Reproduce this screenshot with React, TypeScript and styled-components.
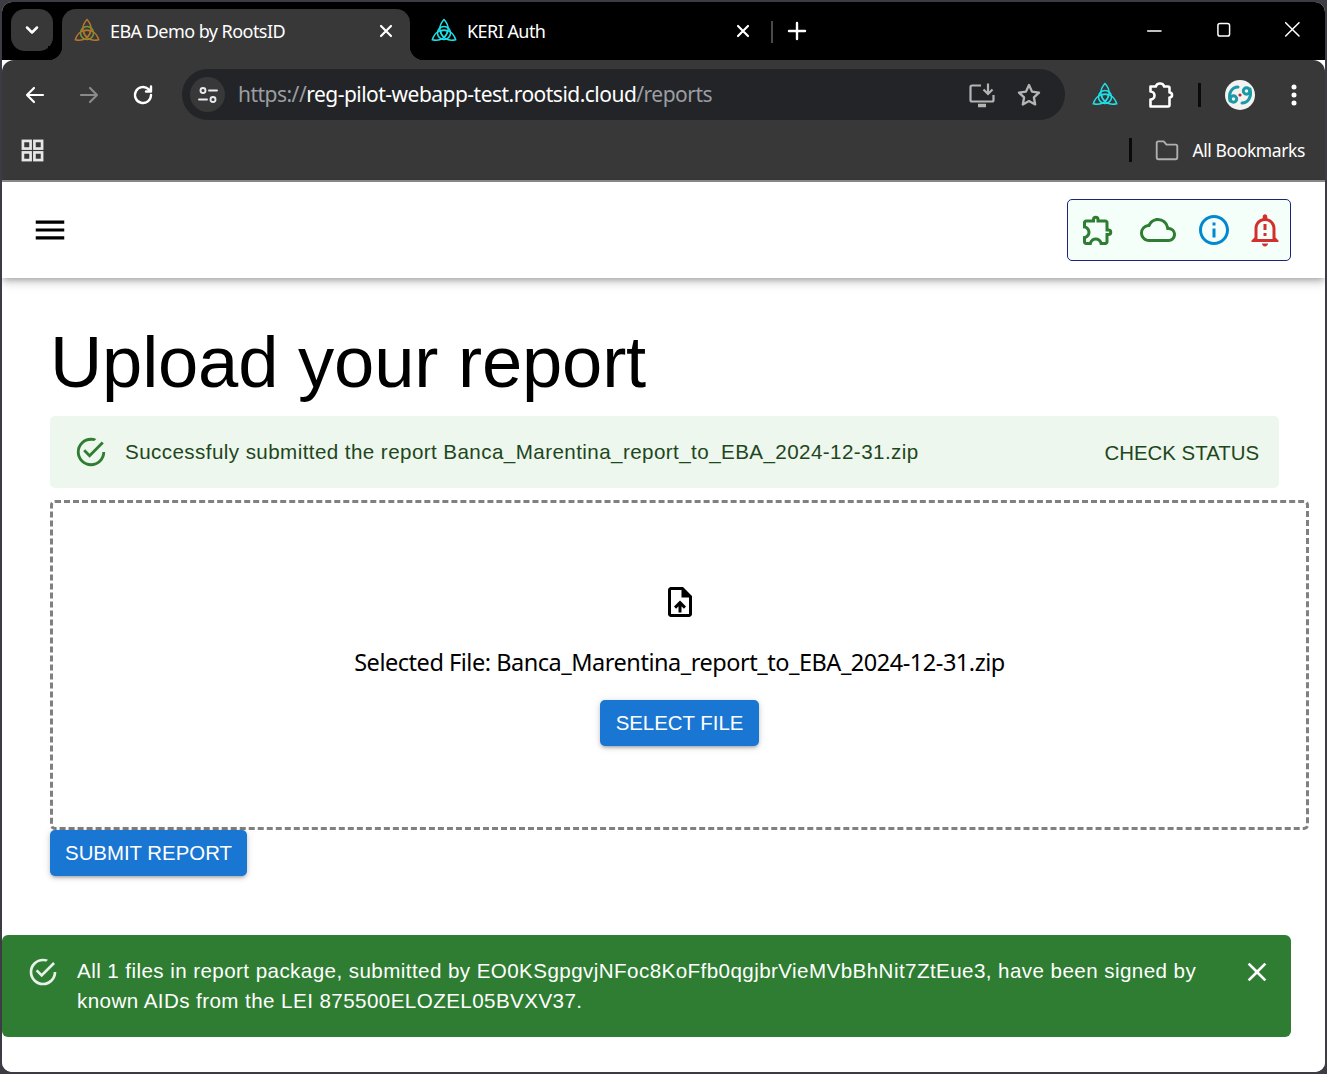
import React from "react";
import styled, { createGlobalStyle } from "styled-components";
import { MdOutlineExtension, MdOutlineCloud, MdInfoOutline, MdOutlineNotificationImportant, MdOutlineUploadFile, MdClose, MdMenu } from "react-icons/md";

const Global = createGlobalStyle`
  html, body { margin: 0; padding: 0; background: #2a2a33; }
  * { box-sizing: border-box; }
  #root { width: 1327px; height: 1074px; overflow: hidden; }
`;

const Win = styled.div`
  width: 1327px; height: 1074px; display: flex; flex-direction: column; position: relative;
  padding: 2px; background: #3c3c44;
`;
const Frame = styled.div`
  flex: 1; display: flex; flex-direction: column; border-radius: 10px; overflow: hidden; background: #fff; position: relative;
`;
const TabStrip = styled.div`
  height: 58px; background: #000; display: flex; align-items: flex-end; padding-left: 9px; flex: none;
  font-family: "Noto Sans", sans-serif;
`;
const TabSearch = styled.button`
  width: 42px; height: 42px; border: 0; border-radius: 14px; background: #383838; color: #fff; display: flex; align-items: center; justify-content: center; padding: 0;
  margin: 0 9px 9px 0; align-self: flex-end;
`;
const Tab = styled.div<{ $active?: boolean }>`
  height: 51px; display: flex; align-items: center; position: relative; color: #fff; font-size: 18px; letter-spacing: -0.55px;
  border-radius: 14px 14px 0 0; padding-bottom: 7px;
  width: ${(p) => (p.$active ? "348px" : "361px")};
  padding-left: ${(p) => (p.$active ? "12px" : "21px")};
  padding-right: ${(p) => (p.$active ? "14px" : "18px")};
  background: ${(p) => (p.$active ? "#383838" : "transparent")};
  &::before, &::after {
    content: ${(p) => (p.$active ? '""' : "none")};
    position: absolute; bottom: 0; width: 14px; height: 14px;
  }
  &::before { left: -14px; background: radial-gradient(circle at 0 0, #000 14px, #383838 14.5px); }
  &::after { right: -14px; background: radial-gradient(circle at 100% 0, #000 14px, #383838 14.5px); }
`;
const TabTitle = styled.span`
  margin-left: 10px; flex: 1; white-space: nowrap;
`;
const TabDivider = styled.div`
  width: 2px; height: 22px; background: #4a4a4a; align-self: flex-end; margin-bottom: 17px;
`;
const PlusBtn = styled.div`
  width: 24px; height: 24px; margin: 0 0 17px 12px; color: #fff;
`;
const WinControls = styled.div`
  margin-left: auto; display: flex; align-items: center; gap: 49px; color: #fff; height: 58px; padding: 0 21px 0 0;
`;
const Toolbar = styled.div`
  height: 69px; background: #383838; display: flex; align-items: flex-start; flex: none; padding: 9px 0 0 21px; color: #fff;
  border-radius: 12px 12px 0 0;
`;
const ToolRow = styled.div`
  height: 51px; display: flex; align-items: center; flex: none;
`;
const NavIcon = styled.div<{ $dim?: boolean; $mr?: number }>`
  width: 24px; height: 24px; flex: none; color: ${(p) => (p.$dim ? "#8a8a8a" : "#fff")};
  margin-right: ${(p) => p.$mr ?? 30}px;
  display: flex; align-items: center; justify-content: center;
`;
const Omnibox = styled.div`
  width: 883px; height: 51px; border-radius: 26px; background: #232427; display: flex; align-items: center; padding: 0 21px 0 8px; flex: none;
`;
const SiteInfo = styled.div`
  width: 35px; height: 35px; border-radius: 50%; background: #383838; display: flex; align-items: center; justify-content: center; color: #e8eaed; flex: none;
`;
const Url = styled.div`
  margin: 0 0 2px 13px; font-family: "Noto Sans", sans-serif; font-size: 21px; letter-spacing: -0.52px; color: #9b9ea3; flex: 1; white-space: nowrap;
`;
const Host = styled.span`
  color: #fff;
`;
const OmniIcon = styled.div<{ $ml?: number }>`
  width: 30px; height: 30px; color: #b4b4b4; margin-left: ${(p) => p.$ml ?? 0}px; display: flex; align-items: center; justify-content: center; flex: none;
`;
const ToolIcons = styled.div`
  display: flex; align-items: center; margin-left: 27px; height: 100%; color: #fff;
`;
const ExtensionGlyph = styled.svg`
  flex: none; margin-left: 28px;
`;
const VSep = styled.div`
  width: 3px; height: 24px; background: #0a0a0a; flex: none; margin-left: 24px;
`;
const BookSep = styled.div`
  width: 3px; height: 24px; background: #0a0a0a; flex: none;
`;
const Avatar = styled.div`
  width: 30px; height: 30px; border-radius: 50%; background: #f3f3f3; overflow: hidden; flex: none; margin: 0 27px 0 24px;
`;
const Bookmarks = styled.div`
  height: 53px; background: #383838; display: flex; align-items: center; padding: 0 20px 9px 19px; flex: none; color: #fff;
  font-family: "Noto Sans", sans-serif; font-size: 17.5px; letter-spacing: -0.4px;
  border-bottom: 2px solid #8c8c8c;
`;
const BookmarkEnd = styled.div`
  margin-left: auto; display: flex; align-items: center; gap: 12px; color: #fff; white-space: nowrap;
`;
const FolderWrap = styled.div`
  width: 26px; height: 26px; color: #b0b0b0; margin-left: 10px; display: flex; align-items: center;
`;
const AppBar = styled.header`
  height: 96px; background: #fff; display: flex; align-items: center; padding: 0 34px 0 29px; flex: none; justify-content: space-between;
  box-shadow: 0 3px 6px -1px rgba(0,0,0,.25), 0 5px 10px rgba(0,0,0,.14); position: relative;
`;
const Hamburger = styled.div`
  width: 38px; height: 38px; color: #000; display: flex; align-items: center; justify-content: center; font-size: 38px;
`;
const StatusBox = styled.div`
  width: 224px; height: 62px; border: 1px solid #1a237e; border-radius: 5px; background: #f5fffa; display: flex; align-items: center; padding: 0 0 0 11.5px;
`;
const StatusIcon = styled.span<{ $c: string; $s: number; $ml?: number }>`
  display: flex; color: ${(p) => p.$c}; font-size: ${(p) => p.$s}px; margin-left: ${(p) => p.$ml ?? 0}px;
`;
const Main = styled.main`
  flex: 1; padding: 0 16px 0 48px; display: flex; flex-direction: column; align-items: flex-start; background: #fff;
`;
const Heading = styled.h1`
  margin: 40px 0 0 0; height: 98px; line-height: 88px; font-family: "Liberation Sans", Arial, sans-serif; font-weight: 400; font-size: 72.4px; color: #000; letter-spacing: -0.2px; white-space: nowrap;
`;
const AlertBar = styled.div`
  width: 1229px; height: 72px; background: #edf7ed; border-radius: 5px; display: flex; align-items: center; padding: 0 20px 0 24px; color: #1e4620;
  font-family: "Liberation Sans", Arial, sans-serif; font-size: 20.6px; letter-spacing: 0.42px;
`;
const AlertMsg = styled.span`
  margin-left: 17px; flex: 1; white-space: nowrap; margin-bottom: 1px;
`;
const AlertAction = styled.span`
  font-size: 20.4px; letter-spacing: 0; margin-top: 3px; color: #1e4620;
`;
const Drop = styled.div`
  margin-top: 12px; width: 1259px; height: 330px; border: 3px dashed #808080; border-radius: 5px; display: flex; flex-direction: column; align-items: center; padding-top: 81px;
`;
const FileIcon = styled.div`
  font-size: 36px; color: #000; display: flex; height: 36px;
`;
const SelectedFile = styled.div`
  margin-top: 25px; font-family: "Noto Sans", sans-serif; font-size: 23.5px; letter-spacing: -0.47px; color: #000; line-height: 34px; white-space: nowrap;
`;
const PrimaryBtn = styled.button<{ $w: number; $mt?: number }>`
  width: ${(p) => p.$w}px; height: 46px; border: 0; border-radius: 5px; background: #1976d2; color: #fff; font-family: "Liberation Sans", Arial, sans-serif; font-size: 20.4px;
  box-shadow: 0 3px 3px -2px rgba(0,0,0,.2), 0 2px 4px rgba(0,0,0,.14), 0 1px 8px rgba(0,0,0,.12); margin-top: ${(p) => p.$mt ?? 0}px; padding: 0; flex: none;
`;
const Snack = styled.div`
  position: absolute; left: 0; top: 933px; width: 1289px; height: 102px; border-radius: 6px; background: #2e7d32; color: #fff; display: flex;
  font-family: "Liberation Sans", Arial, sans-serif; font-size: 20.6px; letter-spacing: 0.42px; line-height: 30px; padding: 21px 0 0 25px;
`;
const SnackIcon = styled.div`
  width: 32px; height: 32px; flex: none; color: #e8f2e8;
`;
const SnackMsg = styled.div`
  margin-left: 18px; width: 1140px;
`;
const SnackClose = styled.div`
  font-size: 32px; display: flex; height: 32px; margin-left: 24px;
`;

const Stroke: React.FC<{ size?: number; sw?: number; children: React.ReactNode }> = ({ size = 24, sw = 2, children }) => (
  <svg width={size} height={size} viewBox="0 0 24 24" fill="none" stroke="currentColor" strokeWidth={sw} strokeLinecap="round" strokeLinejoin="round">{children}</svg>
);

const LOBE = "M13 1.500C7 8 8 15 13 19C18 15 19 8 13 1.500Z";
const Knot: React.FC<{ a: string; b: string; size?: number }> = ({ a, b, size = 26 }) => (
  <svg width={size} height={size} viewBox="0 0 26 26" fill="none" strokeWidth="1.500">
    <circle cx="13" cy="15" r="6.500" stroke={b} />
    <path d={LOBE} stroke={a} />
    <path d={LOBE} stroke={a} transform="rotate(120 13 15)" />
    <path d={LOBE} stroke={a} transform="rotate(240 13 15)" />
  </svg>
);

const SuccessIcon: React.FC<{ size: number }> = ({ size }) => (
  <svg width={size} height={size} viewBox="0 0 24 24" fill="currentColor">
    <path d="M20,12A8,8 0 0,1 12,20A8,8 0 0,1 4,12A8,8 0 0,1 12,4C12.76,4 13.5,4.11 14.2,4.31L15.77,2.74C14.61,2.26 13.34,2 12,2A10,10 0 0,0 2,12A10,10 0 0,0 12,22A10,10 0 0,0 22,12M7.91,10.08L6.5,11.5L11,16L21,6L19.59,4.58L11,13.17L7.91,10.08Z" />
  </svg>
);

export default function App() {
  return (
    <Win>
      <Global />
      <Frame>
        <TabStrip>
          <TabSearch aria-label="Search tabs">
            <Stroke size={20} sw={3}><path d="M6 9l6 6 6-6" /></Stroke>
          </TabSearch>
          <Tab $active>
            <Knot a="#b5752a" b="#6f9a3c" />
            <TabTitle>EBA Demo by RootsID</TabTitle>
            <Stroke size={20} sw={2.6}><path d="M6 6l12 12M18 6L6 18" /></Stroke>
          </Tab>
          <Tab>
            <Knot a="#1fe0e8" b="#1fe0e8" />
            <TabTitle>KERI Auth</TabTitle>
            <Stroke size={20} sw={2.6}><path d="M6 6l12 12M18 6L6 18" /></Stroke>
          </Tab>
          <TabDivider />
          <PlusBtn><Stroke sw={2.4}><path d="M12 4v16M4 12h16" /></Stroke></PlusBtn>
          <WinControls>
            <Stroke size={20} sw={1.8}><path d="M2 12h16" /></Stroke>
            <Stroke size={20} sw={1.8}><rect x="3.500" y="3" width="14" height="15" rx="2.500" /></Stroke>
            <Stroke size={20} sw={1.8}><path d="M2 2l16 16M18 2L2 18" /></Stroke>
          </WinControls>
        </TabStrip>
        <Toolbar>
          <ToolRow>
            <NavIcon><Stroke size={26} sw={2.2}><path d="M20 12H4M11 5l-7 7 7 7" /></Stroke></NavIcon>
            <NavIcon $dim><Stroke size={26} sw={2.2}><path d="M4 12h16M13 5l7 7-7 7" /></Stroke></NavIcon>
            <NavIcon $mr={27}><Stroke size={26} sw={2.4}><path d="M20 12a8 8 0 1 1-2.500-5.800L20 8.500M20 3.500v5h-5" /></Stroke></NavIcon>
            <Omnibox>
              <SiteInfo>
                <Stroke size={24} sw={1.9}><circle cx="7" cy="7.500" r="2.500" /><path d="M13 7.500h8M3 16.500h8" /><circle cx="17" cy="16.500" r="2.500" /></Stroke>
              </SiteInfo>
              <Url>https://<Host>reg-pilot-webapp-test.rootsid.cloud</Host>/reports</Url>
              <OmniIcon>
                <svg width="28" height="28" viewBox="0 0 28 28" fill="none" stroke="currentColor" strokeWidth="2.200">
                  <path d="M13 4.500H4a1.500 1.500 0 0 0-1.500 1.500v13A1.500 1.500 0 0 0 4 20.500h20a1.500 1.500 0 0 0 1.500-1.500v-5" />
                  <path d="M20 2.500v10M15.500 8.500l4.500 4.500 4.500-4.500" />
                  <path d="M10 24.500h8" strokeWidth="3.600" />
                </svg>
              </OmniIcon>
              <OmniIcon $ml={17}>
                <Stroke size={28} sw={2}><path d="M12 3.500l2.600 5.600 6 .8-4.400 4.200 1.100 6L12 17.200l-5.300 2.900 1.100-6L3.400 9.900l6-.8z" /></Stroke>
              </OmniIcon>
            </Omnibox>
            <ToolIcons>
              <Knot a="#1fe0e8" b="#1fe0e8" />
              <ExtensionGlyph width="28" height="28" viewBox="0 0 28 28" fill="none" stroke="currentColor" strokeWidth="2.600" strokeLinejoin="round">
                <path d="M4.500 5.500H10a4 3 0 0 1 8 0h4a1.500 1.500 0 0 1 1.500 1.500v4.500a2.500 2.500 0 0 1 0 5V24a1.500 1.500 0 0 1-1.500 1.500H4.500V18.500a4 4 0 0 0 0-8Z" />
              </ExtensionGlyph>
              <VSep />
              <Avatar>
                <svg width="30" height="30" viewBox="0 0 30 30" fill="none" stroke="#1b9aa6" strokeWidth="3" strokeLinecap="round">
                  <path d="M5 21C3 13 7 7 13 7" />
                  <circle cx="8.500" cy="19" r="3.200" />
                  <path d="M25 9c2 8-2 14-8 14" />
                  <circle cx="21.500" cy="11" r="3.200" />
                  <circle cx="15" cy="15" r="1.600" fill="#c62828" stroke="none" />
                </svg>
              </Avatar>
              <svg width="24" height="28" viewBox="0 0 24 28" fill="currentColor"><circle cx="12" cy="6" r="2.500" /><circle cx="12" cy="14" r="2.500" /><circle cx="12" cy="22" r="2.500" /></svg>
            </ToolIcons>
          </ToolRow>
        </Toolbar>
        <Bookmarks>
          <svg width="23" height="23" viewBox="0 0 24 24" fill="none" stroke="#e6e6e6" strokeWidth="2.800">
            <rect x="2" y="2" width="8" height="8" /><rect x="14" y="2" width="8" height="8" /><rect x="2" y="14" width="8" height="8" /><rect x="14" y="14" width="8" height="8" />
          </svg>
          <BookmarkEnd>
            <BookSep />
            <FolderWrap>
              <Stroke size={26} sw={1.700}><path d="M2.500 19V5.500A1.500 1.500 0 0 1 4 4h5l2.500 3H20a1.500 1.500 0 0 1 1.500 1.500V19a1.500 1.500 0 0 1-1.500 1.500H4A1.500 1.500 0 0 1 2.500 19Z" /></Stroke>
            </FolderWrap>
            All Bookmarks
          </BookmarkEnd>
        </Bookmarks>
        <AppBar>
          <Hamburger><MdMenu /></Hamburger>
          <StatusBox>
            <StatusIcon $c="#2e7d32" $s={36}><MdOutlineExtension /></StatusIcon>
            <StatusIcon $c="#2e7d32" $s={36} $ml={24.5}><MdOutlineCloud /></StatusIcon>
            <StatusIcon $c="#0288d1" $s={36} $ml={20}><MdInfoOutline /></StatusIcon>
            <StatusIcon $c="#d32f2f" $s={36} $ml={15}><MdOutlineNotificationImportant /></StatusIcon>
          </StatusBox>
        </AppBar>
        <Main>
          <Heading>Upload your report</Heading>
          <AlertBar>
            <StatusIcon $c="#2e7d32" $s={34}><SuccessIcon size={34} /></StatusIcon>
            <AlertMsg>Successfuly submitted the report Banca_Marentina_report_to_EBA_2024-12-31.zip</AlertMsg>
            <AlertAction>CHECK STATUS</AlertAction>
          </AlertBar>
          <Drop>
            <FileIcon><MdOutlineUploadFile /></FileIcon>
            <SelectedFile>Selected File: Banca_Marentina_report_to_EBA_2024-12-31.zip</SelectedFile>
            <PrimaryBtn $w={159} $mt={21}>SELECT FILE</PrimaryBtn>
          </Drop>
          <PrimaryBtn $w={197}>SUBMIT REPORT</PrimaryBtn>
        </Main>
        <Snack>
          <SnackIcon><SuccessIcon size={32} /></SnackIcon>
          <SnackMsg>All 1 files in report package, submitted by EO0KSgpgvjNFoc8KoFfb0qgjbrVieMVbBhNit7ZtEue3, have been signed by known AIDs from the LEI 875500ELOZEL05BVXV37.</SnackMsg>
          <SnackClose><MdClose /></SnackClose>
        </Snack>
      </Frame>
    </Win>
  );
}
